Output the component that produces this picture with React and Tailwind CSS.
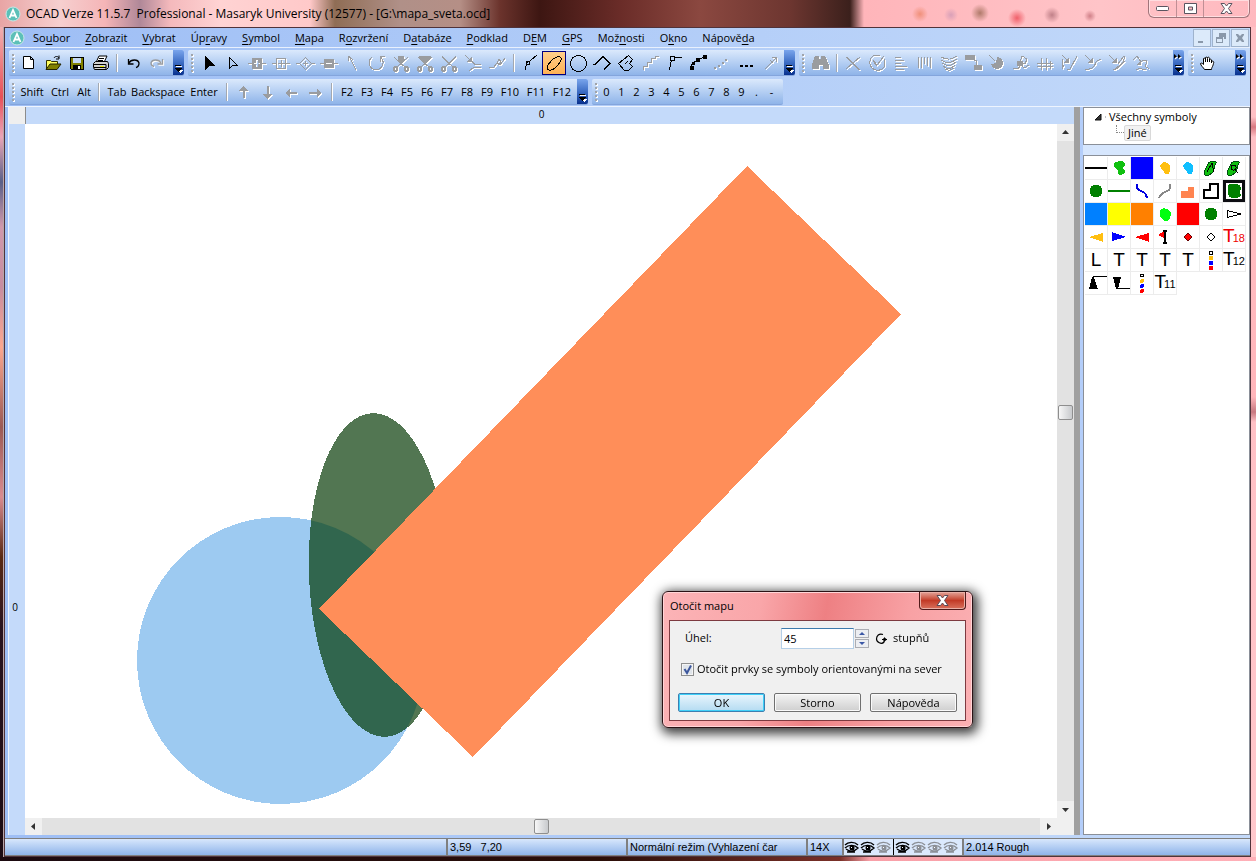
import React, { useState } from 'react';
import clsx from 'clsx';

const menuItems = [
  ['So', 'u', 'bor'],
  ['', 'Z', 'obrazit'],
  ['', 'V', 'ybrat'],
  ['Úp', 'r', 'avy'],
  ['', 'S', 'ymbol'],
  ['', 'M', 'apa'],
  ['R', 'o', 'zvržení'],
  ['D', 'a', 'tabáze'],
  ['', 'P', 'odklad'],
  ['D', 'E', 'M'],
  ['', 'G', 'PS'],
  ['Mož', 'n', 'osti'],
  ['O', 'k', 'no'],
  ['Nápově', 'd', 'a'],
];

// s = stroked path, s2 = thick stroked path, f = filled path, all in currentColor
const rings = 'M6.500 16a2 2 0 1 0 .1 0zM17.500 16a2 2 0 1 0 .1 0z';
const icons = {
  select: { f: 'M8 5v14l4-4h6z' },
  selectPoint: { s: 'M8.500 6.500v11l3-3h5z' },
  addNode: { s: 'M3 12.500h5M17 12.500h4', f: 'M7 7h10v11H7zM11 9v3H9v1h2v3h2v-3h2v-1h-2V9z' },
  addCorner: { s: 'M3 12.500h4M17 12.500h4M7.500 7.500h9v10h-9zM12.500 9v7M9 12.500h7' },
  addDash: { s: 'M3 12.500h3M18 12.500h4M12.500 6.500l6 6-6 6-6-6zM12.500 10v5M10 12.500h5' },
  removeNode: { s: 'M3 12.500h5M17 12.500h4', f: 'M7 8h10v9H7zM9 12v1h6v-1z' },
  direction: { s: 'M8 5l7 14M7.500 5v5M8 5l4 4' },
  rotate: { s: 'M7.500 5.500C2 10 4 18.500 11 18.500c7 0 9-8 5-12M20 5.500h-4.500v5' },
  cutPoint: { s: 'M5 6l11 10M19 6L8 16M6 7l11 10M18 7L7 17', s2: rings, f: 'M9 5h6v5l-3 3-3-3z' },
  cutArea: { s: 'M5 6l11 10M19 6L8 16M6 7l11 10M18 7L7 17', s2: rings, f: 'M6 5h12v3l-6 5-6-5z' },
  cutLine: { s: 'M5 5l11 11M19 5L8 16M5 6l12 11M19 6L7 17', s2: rings },
  merge: { s: 'M4 4l6 6M20 13.500h-6l-3-3M20 16.500h-7l-5 3', f: 'M11 5v6H5z' },
  reshape: { s: 'M4 17l5-1 3-4 3 2 5-7M12 12l2-4 2 3-3 3' },
  curve: { s: 'M7.500 19c0-5 1-7 3-9M12 10l7-6M8.500 10.500h3v3h-3z' },
  ellipse: { s: 'M6 18.500C3 15 13 4 18 6s-7 16-12 12.500z' },
  circle: { s: 'M12.500 4.500a8 8 0 1 1 0 16a8 8 0 1 1 0-16z' },
  rectLine: { s: 'M3 13.500h2L13 5.500l7 7-6 6' },
  rectArea: { s: 'M14.500 4.500l4 4-3 4 3 3-4 4h-4l-6-7zM14 10l-3 3' },
  stairs: { s: 'M5.500 19v-4h4v-4h4V7.500h4V5h3' },
  numeric: { s: 'M7.500 19l2-10M12 6.500h8M8.500 5.500h4v4h-4z' },
  freehand: { s: 'M5 17c1-6 3-6 7-8l6-3', f: 'M4 15h4v4H4zM10 7h4v4h-4zM17 4h4v4h-4zM6 11h3v3H6z' },
  dotted: { s2: 'M4 17h2M8 15h2M12 12h2M15 9h2' },
  more: { f: 'M6 14h3v2H6zM11 14h3v2h-3zM16 14h3v2h-3z' },
  measure: { s: 'M7 18L18 7M14 6.500h4.500V11M12 9l3 3' },
  find: { f: 'M7 5h4v3h2V5h4l4 9v4h-6v-4h-4v4H4v-4z' },
  cross: { s: 'M5 6l13 13M19 6L5 18M6 6l13 13' },
  check: { s: 'M15 5C9 2 4 7 5 13s10 9 14 3c1-3 1-5 0-8M8 9l4 5 7-9M8 10l4 5' },
  alignLeft: { s: 'M6 6.500h6M6 9.500h9M6 12.500h6M6 15.500h12M6 18.500h9' },
  bars: { s: 'M5.500 6v11M8.500 6v11M11.500 6v7M14.500 6v9M17.500 6v11' },
  waves: { s: 'M4 6c6 3 10 3 16-1M4 9c6 4 10 3 16-1M5 12c6 4 9 3 14-1M6 15c5 4 8 3 12-1M8 18c4 2 6 1 9-1' },
  swap: { s: 'M13 9h2v5', f: 'M4 4h10v5H4zM13 14h8v5h-8z' },
  target: { s: 'M4 4l6 6', f: 'M12 6a6 6 0 1 1-6 7l5-1z' },
  chain: { s: 'M4 17l5 1 3-4 3 3 5-3M9 13l4-3M13 5l5 3-2 5-5-2z', f: 'M8 10h6v5H8z' },
  fence: { s: 'M4 12.500h16M4 15.500h16M8.500 7v12M13.500 7v12M17.500 10v8' },
  bend: { s: 'M5.500 8v10l1-4M5 4l7 7M10 18l3 0 7-13', f: 'M12 6v6H6z' },
  smooth: { s: 'M4 4l7 7M4 18.500c6 0 9-2 10-5s3-5 6-5', f: 'M12 6v6H6z' },
  fill: { s: 'M4 4l7 7M8 19c6-1 10-5 12-14M10 18l10-8M13 13l6-8', f: 'M12 6v6H6z' },
  wave: { s: 'M4 9l4-4 4 6-3 3M12 11c4-4 8-1 5 2s3 4 3 5M7 19c3-3 6 0 10-1', f: 'M12 9v5H8z' },
};

const editTools = [
  ['select'], ['selectPoint'], ['addNode', 1], ['addCorner', 1], ['addDash', 1], ['removeNode', 1],
  ['direction', 1], ['rotate', 1], ['cutPoint', 1], ['cutArea', 1], ['cutLine', 1], ['merge', 1], ['reshape', 1],
];
const drawTools = [
  ['curve'], ['ellipse'], ['circle'], ['rectLine'], ['rectArea'], ['stairs', 1],
  ['numeric'], ['freehand'], ['dotted', 1], ['more'], ['measure', 1],
];
const objectTools = [
  'cross', 'check', 'alignLeft', 'bars', 'waves', 'swap', 'target', 'chain', 'fence', 'bend', 'smooth', 'fill', 'wave',
];

const Glyph = ({ icon }) => (
  <>
    {icon.f && <path d={icon.f} fill="currentColor" fillRule="evenodd" />}
    {icon.s && <path d={icon.s} fill="none" stroke="currentColor" />}
    {icon.s2 && <path d={icon.s2} fill="none" stroke="currentColor" strokeWidth="2" />}
  </>
);

const ToolButton = ({ name, off, active, onClick }) => (
  <button
    aria-label={name}
    disabled={Boolean(off)}
    onClick={onClick}
    className={clsx(
      'flex size-6 shrink-0 items-center justify-center',
      off ? 'text-[#9a9c9f]' : 'text-black',
      active && 'bg-gradient-to-b from-[#ffd08c] to-[#ffb051] outline -outline-offset-1 outline-[#000080]'
    )}
  >
    <svg width="24" height="24" viewBox="0 0 24 24" shapeRendering="crispEdges" className="shrink-0">
      {off ? (
        <g className="text-white" transform="translate(1 1)">
          <Glyph icon={icons[name]} />
        </g>
      ) : null}
      <Glyph icon={icons[name]} />
    </svg>
  </button>
);

const Grip = () => (
  <div className="flex shrink-0 flex-col gap-0.5 pr-0.5 pl-[3px]">
    {[0, 1, 2, 3, 4].map((i) => (
      <span key={i} className="size-0.5 bg-[#a0a4aa] shadow-[1px_1px_0_white]" />
    ))}
  </div>
);

const Divider = () => (
  <div className="flex w-[9px] shrink-0 justify-center">
    <span className="h-[18px] w-0.5 border-r border-white bg-[#a3a8b0]" />
  </div>
);

const Overflow = ({ more }) => (
  <button
    aria-label="Toolbar options"
    className="ml-auto flex h-full w-[11px] shrink-0 flex-col items-center justify-between rounded-r-xs bg-gradient-to-b from-[#7aa5ec] via-[#3d6dc4] to-[#08308e] pt-1 pb-0.5"
  >
    <svg width="9" height="6" viewBox="0 0 9 6">
      {more && (
        <>
          <path d="M1 1l3 2.500-3 2zM5 1l3 2.500-3 2z" fill="#fff" />
          <path d="M0 0l3 2.500-3 2zM4 0l3 2.500-3 2z" fill="#000" />
        </>
      )}
    </svg>
    <svg width="9" height="8" viewBox="0 0 9 8" shapeRendering="crispEdges">
      <path d="M2 1h6v1H2zM3 5h6L6 8z" fill="#fff" />
      <path d="M1 0h6v1H1zM1 3h7L4.500 7z" fill="#000" />
    </svg>
  </button>
);

const Bar = ({ className, children }) => (
  <div
    className={clsx(
      'flex h-[26px] shrink-0 items-center rounded-xs border-b border-[#84a5dc] bg-gradient-to-b from-[#dbe9fc] via-[#b5cff3] to-[#8fb4e9]',
      className
    )}
  >
    {children}
  </div>
);

const KeyButton = ({ className, children }) => (
  <button className={clsx('shrink-0 text-center text-[11px] leading-4 text-black', className)}>{children}</button>
);

const Logo = () => (
  <svg width="16" height="16" viewBox="0 0 16 16" className="shrink-0">
    <circle cx="8" cy="8" r="7" fill="#5cc0b8" stroke="#c7e8e6" />
    <path d="M4.500 12L8 4l3.500 8M6 9.500h4" fill="none" stroke="#fff" strokeWidth="1.800" />
  </svg>
);

const TitleBar = () => (
  <header className="flex h-[27px] shrink-0 items-center bg-[radial-gradient(circle_at_1017px_18px,#f0606a_0,transparent_9px),radial-gradient(circle_at_920px_14px,#f0907a_0,transparent_8px),radial-gradient(circle_at_980px_13px,#b07a6a_0,transparent_9px),radial-gradient(circle_at_951px_15px,#d9a0b8_0,transparent_7px),radial-gradient(circle_at_1052px_15px,#c08088_0,transparent_8px),radial-gradient(circle_at_1090px_16px,#d08088_0,transparent_6px),linear-gradient(90deg,#e8a5a5_0,#f6cfcf_60px,#f5b5b7_105px,#b08898_140px,#f4b9bc_170px,#ffd3d3_220px,#ffc9c9_310px,#8f6d55_335px,#b09088_400px,#b58f86_460px,#6b332c_500px,#3d1612_540px,#6a2c28_620px,#8b4840_700px,#6d3630_790px,#3b201c_850px,#ffb5ba_864px,#ffc4c8_1100px,#ffb9bf_100%)] pl-[5px]">
    <Logo />
    <h1 className="ml-[5px] text-[12px] whitespace-pre text-black">
      {'OCAD Verze 11.5.7  Professional - Masaryk University (12577) - [G:\\mapa_sveta.ocd]'}
    </h1>
    <div className="mr-1.5 ml-auto flex h-[18px] self-start rounded-b-md border border-t-0 border-[#a0757b] shadow-[inset_0_0_0_1px_#ffdde0]">
      <button aria-label="Minimize" className="flex w-7 items-center justify-center border-r border-[#c08f95]">
        <svg width="13" height="6" viewBox="0 0 13 6"><rect x=".5" y=".5" width="12" height="4" rx="1" fill="#fff" stroke="#5a5560" /></svg>
      </button>
      <button aria-label="Maximize" className="flex w-[27px] items-center justify-center border-r border-[#c08f95]">
        <svg width="13" height="11" viewBox="0 0 13 11"><path d="M.5.5h12v10H.5zM4.500 4v3h4V4z" fill="#fff" stroke="#5a5560" fillRule="evenodd" /></svg>
      </button>
      <button aria-label="Close" className="flex w-[45px] items-center justify-center">
        <svg width="13" height="11" viewBox="0 0 13 11"><path d="M1 .5h3.500l2 2.500 2-2.500H12L8.500 5.500 12 10.500H8.500l-2-2.500-2 2.500H1l3.500-5z" fill="#fff" stroke="#5a5560" /></svg>
      </button>
    </div>
  </header>
);

const MenuBar = () => (
  <nav className="flex h-5 shrink-0 items-center border-b border-[#e8f0fd] pl-1">
    <Logo />
    <div className="flex gap-px pl-px">
      {menuItems.map(([pre, key, post]) => (
        <button key={pre + key + post} className="px-[7px] text-[11px] leading-4 text-black">
          {pre}<span className="underline underline-offset-2">{key}</span>{post}
        </button>
      ))}
    </div>
    <div className="ml-auto flex gap-px pr-px text-[#8a98aa]">
      {['M5 12h5v2H5z', 'M7 4h7v6h-2V8H7zM4 8h7v6H4zM5 10v3h5v-3z', 'M5 5h2l2 2 2-2h2v1l-2 3 2 3v1h-2l-2-2-2 2H5v-1l2-3-2-3z'].map((d) => (
        <button key={d} aria-label="Document window" className="flex size-[18px] items-center justify-center border border-[#9fb3cd] bg-[#dceafa]">
          <svg width="18" height="18" viewBox="0 0 18 18" className="shrink-0"><path d={d} fill="currentColor" fillRule="evenodd" /></svg>
        </button>
      ))}
    </div>
  </nav>
);

const FileIcons = () => (
  <>
    <button aria-label="New" className="size-6 shrink-0">
      <svg width="24" height="24" viewBox="0 0 24 24">
        <path d="M7.500 5.500h7l3 3v9h-10zM14.500 5.500v3h3" fill="#fff" stroke="#000" />
      </svg>
    </button>
    <button aria-label="Open" className="size-6 shrink-0">
      <svg width="24" height="24" viewBox="0 0 24 24">
        <path d="M6.500 18V9.500h4l1 1h6V13" fill="#ffff60" stroke="#333300" />
        <path d="M6 18.500l4-5.500h11l-4 5.500z" fill="#808000" stroke="#222200" />
        <path d="M14 7c1-2 4-2 5 0M19 4.500V8h-3" fill="none" stroke="#000" />
      </svg>
    </button>
    <button aria-label="Save" className="size-6 shrink-0">
      <svg width="24" height="24" viewBox="0 0 24 24" shapeRendering="crispEdges">
        <path d="M6.500 6.500h13v12h-12l-1-1z" fill="#808000" stroke="#000" />
        <path d="M9 7h8v5H9z" fill="#c5d8f3" />
        <path d="M9 14h8v4H9z" fill="#000" />
        <path d="M14 15h2v3h-2z" fill="#fff" />
      </svg>
    </button>
    <button aria-label="Print" className="size-6 shrink-0">
      <svg width="24" height="24" viewBox="0 0 24 24">
        <path d="M8 11.500l3-6.500h8l-3 6.500z" fill="#fff" stroke="#000" />
        <path d="M11 7.500h5M10 9.500h5" stroke="#000" />
        <path d="M5.500 12.500l2-2h12l1 2v4l-2 2h-12l-1-2z" fill="#d0d0d0" stroke="#000" />
        <path d="M5 13.500h13v5M6 16.500h12" fill="none" stroke="#000" />
        <path d="M12 15h4v1h-4z" fill="#e8e800" />
      </svg>
    </button>
    <Divider />
    <button aria-label="Undo" className="size-6 shrink-0">
      <svg width="24" height="24" viewBox="0 0 24 24">
        <path d="M8 12c2-4 9-4 10 0 0 2-1 4-3 4.500M7.500 8v5h5" fill="none" stroke="#000" strokeWidth="1.300" />
      </svg>
    </button>
    <button aria-label="Redo" disabled className="size-6 shrink-0">
      <svg width="24" height="24" viewBox="0 0 24 24" fill="none">
        <path d="M17 13c-2-4-9-4-10 0 0 2 1 3 3 3.500M18.500 9v5h-5" stroke="#fff" strokeWidth="1.300" />
        <path d="M16 12c-2-4-9-4-10 0 0 2 1 3 3 3.500M17.500 8v5h-5" stroke="#9a9c9f" strokeWidth="1.300" />
      </svg>
    </button>
  </>
);

const arrowKeys = [
  'M12 18v-7H8l4.500-5L17 11h-3v7z',
  'M12 6v8H8l4.500 5L17 14h-3V6z',
  'M18 12h-7V9l-5 4 5 4v-3h7z',
  'M6 12h8V9l5 4-5 4v-3H6z',
];

const Toolbars = ({ tool, setTool }) => (
  <div className="flex shrink-0 flex-col gap-[3px] border-b border-[#eef4fe] px-1 pt-0.5 pb-px">
    <div className="flex gap-1">
      <Bar className="w-[175px]"><Grip /><FileIcons /><Overflow /></Bar>
      <Bar className="w-[607px]">
        <Grip />
        <div className="w-0.5 shrink-0" />
        {editTools.map(([name, off]) => <ToolButton key={name} name={name} off={off} />)}
        <Divider />
        {drawTools.map(([name, off]) => (
          <ToolButton key={name} name={name} off={off} active={tool === name} onClick={() => setTool(name)} />
        ))}
        <Overflow />
      </Bar>
      <Bar className="min-w-0 flex-1">
        <Grip />
        <div className="w-0.5 shrink-0" />
        <ToolButton name="find" off />
        <Divider />
        {objectTools.map((name) => <ToolButton key={name} name={name} off />)}
        <Overflow more />
      </Bar>
      <Bar className="w-[58px]">
        <Grip />
        <button aria-label="Pan" className="size-6 shrink-0">
          <svg width="24" height="24" viewBox="0 0 24 24">
            <path d="M9.500 18.500c-1-2-4-4-4-6 1-1 2 0 3 1V7.500c1-1 2 0 2 1V6.500c1-1 2 0 2 1V6.500c1-1 2 0 2 1v1c1-1 2 0 2 1v1c1-1 3 0 2 2-1 4-2 4-2 6z" fill="#fff" stroke="#000" />
            <path d="M10.500 8v3M12.500 8v3M14.500 8v3M16.500 9v3" stroke="#000" />
          </svg>
        </button>
        <Overflow more />
      </Bar>
    </div>
    <div className="flex gap-1">
      <Bar className="w-[579px]">
        <Grip />
        <KeyButton className="ml-1 w-6">Shift</KeyButton>
        <KeyButton className="ml-1.5 w-5">Ctrl</KeyButton>
        <KeyButton className="ml-1 w-5">Alt</KeyButton>
        <Divider />
        <KeyButton className="ml-1 w-5">Tab</KeyButton>
        <KeyButton className="ml-1 w-[54px]">Backspace</KeyButton>
        <KeyButton className="ml-1 w-[30px]">Enter</KeyButton>
        <div className="w-[3px] shrink-0" />
        <Divider />
        {arrowKeys.map((d) => (
          <button key={d} aria-label="Arrow key" className="size-6 shrink-0">
            <svg width="24" height="24" viewBox="0 0 24 24" shapeRendering="crispEdges">
              <path d={d} fill="#fff" transform="translate(1 1)" />
              <path d={d} fill="#9a9c9f" />
            </svg>
          </button>
        ))}
        <Divider />
        <div className="flex pl-px">
          {['F2', 'F3', 'F4', 'F5', 'F6', 'F7', 'F8', 'F9'].map((k) => <KeyButton key={k} className="w-5">{k}</KeyButton>)}
          {['F10', 'F11', 'F12'].map((k) => <KeyButton key={k} className="w-[26px]">{k}</KeyButton>)}
        </div>
        <Overflow />
      </Bar>
      <Bar className="w-[191px]">
        <Grip />
        {['0', '1', '2', '3', '4', '5', '6', '7', '8', '9', '.', '-'].map((k) => (
          <KeyButton key={k} className="w-[15px]">{k}</KeyButton>
        ))}
      </Bar>
    </div>
  </div>
);

const arrowPaths = { up: 'M5 10h7L8.500 6z', down: 'M5 7h7l-3.500 4z', left: 'M10 5v7L6 8.500z', right: 'M7 5v7l4-3.500z' };

const ScrollArrow = ({ dir }) => (
  <button aria-label={`Scroll ${dir}`} className="size-[17px] shrink-0 bg-[#f0f0f0]">
    <svg width="17" height="17" viewBox="0 0 17 17"><path d={arrowPaths[dir]} fill="#333" /></svg>
  </button>
);

const thumbClass = 'size-[15px] shrink-0 rounded-xs border border-[#8e8e8e] bg-gradient-to-r from-[#f7f7f7] to-[#c8cacd]';

const MapDrawing = () => (
  <svg width="1032" height="694" viewBox="0 0 1032 694" shapeRendering="crispEdges" className="block">
    <defs>
      <clipPath id="lake"><circle cx="255.500" cy="536.500" r="143.500" /></clipPath>
    </defs>
    <circle cx="255.500" cy="536.500" r="143.500" fill="#9dcaf1" />
    <ellipse cx="354" cy="451" rx="70" ry="162" transform="rotate(-2.400 354 451)" fill="#527652" />
    <g clipPath="url(#lake)">
      <ellipse cx="354" cy="451" rx="70" ry="162" transform="rotate(-2.400 354 451)" fill="#31664e" />
    </g>
    <path d="M722 42L876 190 448 633 294 485z" fill="#ff8e59" />
  </svg>
);

const MapArea = () => (
  <main className="flex min-w-0 flex-1 flex-col border-l border-[#eef4fe]">
    <div className="flex h-[17px] shrink-0">
      <div className="w-[17px] border-r border-[#8c8c8c] bg-[#efefef]" />
      <div className="flex-1 bg-[#c4dafa] pr-[17px] text-center text-[10px] leading-[14px]">0</div>
    </div>
    <div className="flex min-h-0 flex-1">
      <div className="w-4 shrink-0 bg-[#c4dafa] pt-[475px] pr-1 text-center text-[10px] leading-4">0</div>
      <div className="flex min-w-0 flex-1 flex-col">
        <div className="flex min-h-0 flex-1">
          <div className="min-w-0 flex-1 overflow-hidden bg-white"><MapDrawing /></div>
          <div className="flex w-[17px] shrink-0 flex-col items-center bg-[#e2e2e2]">
            <ScrollArrow dir="up" />
            <div className={clsx(thumbClass, 'mt-[264px] mb-auto')} />
            <ScrollArrow dir="down" />
          </div>
        </div>
        <div className="flex shrink-0 items-center bg-[#e2e2e2]">
          <ScrollArrow dir="left" />
          <div className={clsx(thumbClass, 'mx-auto')} />
          <ScrollArrow dir="right" />
          <div className="size-[17px] shrink-0 bg-[#f0f0f0]" />
        </div>
      </div>
    </div>
  </main>
);

const Path = ({ d, fill = 'none', stroke, width = 1 }) => <path d={d} fill={fill} stroke={stroke} strokeWidth={width} />;

const blob = 'M7 7c2-3 6-2 8 0s0 3 1 5-1 6-4 5-2-4-4-5-2-3-1-5z';
const leaf = 'M5 18c-2-4 1-6 2-9s2-5 6-5 4 1 2 4 0 5-2 7-5 5-8 3z';
const symbols = [
  <Path d="M0 11h22" stroke="#000" width={2} />,
  <Path d="M6 7c1-3 4-2 6-3s4 1 5 3-2 2-2 4 3 2 2 4-4 4-6 3 0-4-1-5-5-2-4-6z" fill="#10c010" />,
  <Path d="M0 0h22v22H0z" fill="#00f" />,
  <Path d={blob} fill="#ffbf10" />,
  <Path d={blob} fill="#10bfff" />,
  <><Path d={leaf} fill="#10c010" stroke="#004d10" /><Path d="M7 15l5-9 2 9" stroke="#000" /></>,
  <><Path d={leaf} fill="#10c010" stroke="#004d10" /><Path d="M8 10c1-3 6-2 5 1s-5 3-5-1zM12 13l3 3" stroke="#000" /></>,
  <circle cx="11" cy="11" r="6.500" fill="#008000" />,
  <Path d="M0 11h22" stroke="#008000" width={2} />,
  <Path d="M6 4c0 4 0 6 4 7s5 3 6 7" stroke="#0000e0" width={2} />,
  <Path d="M16 4c1 6-2 7-5 8s-5 3-6 6" stroke="#888" width={2} />,
  <Path d="M4 11h7V7h6v11H4z" fill="#ff8450" />,
  <Path d="M10 4h8v14H4v-8h6z" stroke="#000" width={2} />,
  <><Path d="M5 5c3-2 9-1 12 0l1 4-1 3 1 4c-3 3-9 2-12 1l-1-5z" fill="#008000" /><Path d="M1.500 1.500h19v19h-19z" stroke="#0d0d12" width={3} /></>,
  <Path d="M0 0h22v22H0z" fill="#0080ff" />,
  <Path d="M0 0h22v22H0z" fill="#ff0" />,
  <Path d="M0 0h22v22H0z" fill="#ff8000" />,
  <Path d="M6 8c2-4 6-3 9-1s2 5 1 8-4 5-7 2-4-5-3-9z" fill="#00ff10" />,
  <Path d="M0 0h22v22H0z" fill="#f00" />,
  <circle cx="11" cy="11" r="6.500" fill="#008000" />,
  <Path d="M4.500 7.500L18 11 4.500 14.500z" stroke="#000" />,
  <Path d="M4 11l14-4v9z" fill="#ffbf10" />,
  <Path d="M4 6l14 5-14 4z" fill="#00f" />,
  <Path d="M4 11l14-4v9z" fill="#f00" />,
  <><Path d="M4 9l6-4v7z" fill="#f00" /><Path d="M11 4v14M9 17h4M9 5h4" stroke="#000" width={2} /></>,
  <Path d="M11 7l4 4-4 4-4-4z" fill="#f00" stroke="#600" />,
  <Path d="M11 7l4 4-4 4-4-4z" stroke="#000" />,
  'T18', 'L', 'T', 'T', 'T', 'T',
  <><Path d="M9.500 2.500h3v3h-3z" stroke="#000" /><Path d="M9 7h4v4H9z" fill="#ffbf10" /><Path d="M9 12h4v4H9z" fill="#00f" /><Path d="M9 17h4v4H9z" fill="#f00" /></>,
  'T12',
  <><Path d="M4 17l3-12h2l4 12z" fill="#000" /><Path d="M8 4.500h14" stroke="#000" /></>,
  <><Path d="M5 5h8l-3 12H8z" fill="#000" /><Path d="M8 16.500h14" stroke="#000" /></>,
  <><circle cx="11" cy="3.500" r="1.500" fill="none" stroke="#000" /><circle cx="11" cy="9" r="2" fill="#ffbf10" /><circle cx="11" cy="14" r="2" fill="#00f" /><circle cx="11" cy="19" r="2" fill="#f00" /></>,
  'T11',
];

const SymbolCell = ({ symbol, index }) => (
  <button
    aria-label={`Symbol ${index + 1}`}
    className="flex size-[23px] items-center justify-center border-r border-b border-[#ececec]"
  >
    {typeof symbol === 'string' ? (
      <span className={clsx('flex items-baseline font-[Liberation_Sans] text-[19px] leading-5', symbol === 'T18' ? 'text-[#e00]' : 'text-black')}>
        {symbol[0]}
        {symbol.length > 1 && <span className="-ml-0.5 text-[11px]">{symbol.slice(1)}</span>}
      </span>
    ) : (
      <svg width="22" height="22" viewBox="0 0 22 22" shapeRendering="crispEdges" className="shrink-0">{symbol}</svg>
    )}
  </button>
);

const SymbolPanel = () => (
  <aside className="flex w-[167px] shrink-0 flex-col bg-[#d6e6fd]">
    <div className="h-[38px] shrink-0 border border-[#8a8f98] bg-white text-[11px] leading-4">
      <div className="flex items-center pt-px pl-2.5">
        <svg width="15" height="10" viewBox="0 0 15 10"><path d="M7 2v6H1z" fill="#333" stroke="#111" /><path d="M11 5h1" stroke="#888" /></svg>
        <span>Všechny symboly</span>
      </div>
      <div className="flex items-start pl-8">
        <span className="h-2 w-2 border-b border-l border-dotted border-[#888]" />
        <span className="rounded-xs border border-[#d9d9d9] bg-[#f2f2f2] px-[3px] leading-[14px]">Jiné</span>
      </div>
    </div>
    <div className="mt-[10px] min-h-0 flex-1 border border-[#8a8f98] bg-white p-px">
      <div className="grid grid-cols-[repeat(7,23px)]">
        {symbols.map((symbol, index) => <SymbolCell key={index} symbol={symbol} index={index} />)}
      </div>
    </div>
  </aside>
);

const Eye = ({ off }) => (
  <svg width="16" height="14" viewBox="0 0 16 14" className={clsx('shrink-0', off ? 'text-[#8b8f96]' : 'text-black')}>
    <path d="M1 5c3-3 9-4 13 0M1 8c4-4 10-3 13 0-4 4-8 4-12 1M3 12h8" fill="none" stroke="currentColor" strokeWidth="1.400" />
    <circle cx="8" cy="8" r="2.500" fill="currentColor" />
    <path d="M7 7h1v1H7z" fill="#fff" />
  </svg>
);

const StatusCell = ({ className, children }) => (
  <div className={clsx('flex shrink-0 items-center overflow-hidden border-l-2 border-[#7f7f7f] pl-0.5 whitespace-pre', className)}>{children}</div>
);

const StatusBar = () => (
  <footer className="flex h-[18px] shrink-0 border-y border-[#7f7f7f] bg-gradient-to-b from-[#d8e7fc] to-[#8fb4e9] font-[Liberation_Sans] text-[11px] text-black">
    <div className="w-[441px] shrink-0" />
    <StatusCell className="w-[180px]">{'3,59   7,20'}</StatusCell>
    <StatusCell className="w-[180px]">Normální režim (Vyhlazení čar</StatusCell>
    <StatusCell className="w-9">14X</StatusCell>
    <div className="flex w-[120px] shrink-0 items-center border-l-2 border-[#7f7f7f] bg-[#dbe9fd]">
      <Eye /><Eye /><Eye off />
      <span className="mx-px h-4 w-px bg-black" />
      <Eye /><Eye off /><Eye off /><Eye off />
    </div>
    <StatusCell className="flex-1">2.014 Rough</StatusCell>
  </footer>
);

const DialogButton = ({ primary, children }) => (
  <button
    className={clsx(
      'h-[19px] flex-1 rounded-xs border text-[11px] leading-[15px] text-black',
      primary
        ? 'border-[#3c7fb1] bg-gradient-to-b from-[#e9f5fc] to-[#b4dcf2] shadow-[inset_0_0_0_1px_#3fd0f8]'
        : 'border-[#707070] bg-gradient-to-b from-[#f4f4f4] to-[#cfcfcf] shadow-[inset_0_0_0_1px_#fafafa]'
    )}
  >
    {children}
  </button>
);

const RotateDialog = () => {
  const [angle, setAngle] = useState('45');
  const [rotateSymbols, setRotateSymbols] = useState(true);

  return (
    <div
      role="dialog"
      aria-label="Otočit mapu"
      className="absolute top-[591px] left-[662px] w-[311px] rounded-md border border-[#2a1215] bg-[linear-gradient(100deg,#fcb4b7_0,#f9a6a9_30%,#ee8083_50%,#f8a1a4_75%,#fbb1b4_100%)] px-1.5 pb-1.5 shadow-[inset_0_0_0_1px_#ffd5d7,2px_3px_11px_3px_rgba(0,0,0,0.75)]"
    >
      <div className="flex h-7 items-center">
        <h2 className="pl-px text-[11px] text-black">Otočit mapu</h2>
        <button
          aria-label="Close"
          className="ml-auto flex h-[18px] w-[47px] items-center justify-center self-start rounded-b-sm border border-t-0 border-[#4f1a1a] bg-gradient-to-b from-[#e2a399] via-[#c23a26] to-[#d9705c] shadow-[inset_0_0_0_1px_#eab0a6]"
        >
          <svg width="13" height="11" viewBox="0 0 13 11"><path d="M1 .5h3.500l2 2.500 2-2.500H12L8.500 5.500 12 10.500H8.500l-2-2.500-2 2.500H1l3.500-5z" fill="#fff" stroke="#5b4a55" /></svg>
        </button>
      </div>
      <div className="flex flex-col border border-[#7d3a40] bg-[#f0f0f0] px-2 pt-[7px] pb-2 text-[11px] text-black">
        <div className="flex h-[21px] items-center pl-[7px]">
          <label htmlFor="angle" className="w-24">Úhel:</label>
          <input
            id="angle"
            autoFocus
            value={angle}
            onChange={(e) => setAngle(e.target.value)}
            className="h-[21px] w-[73px] border border-[#b5cfe7] border-t-[#3d7bad] bg-white px-0.5 outline-none"
          />
          <div className="ml-px flex w-3.5 flex-col gap-px">
            {['M3 6h6L6 3z', 'M3 3h6L6 6z'].map((d) => (
              <button key={d} aria-label="Step" className="flex h-[9px] items-center justify-center border border-[#abadb3] bg-[#eceef2]">
                <svg width="12" height="9" viewBox="0 0 12 9" className="shrink-0"><path d={d} fill="#3a57a5" /></svg>
              </button>
            ))}
          </div>
          <svg width="14" height="12" viewBox="0 0 14 12" className="mr-1 ml-1.5 shrink-0">
            <path d="M8 1.500C4 0 1.500 3 1.500 6s5 6 7.500 3V5M7 6.500h5" fill="none" stroke="#000" strokeWidth="1.200" />
            <path d="M9 4l3 2.500L9 9z" />
          </svg>
          <span>stupňů</span>
        </div>
        <label className="mt-3 flex h-4 items-center gap-[3px] pl-[3px]">
          <span className="relative flex">
            <input
              type="checkbox"
              checked={rotateSymbols}
              onChange={(e) => setRotateSymbols(e.target.checked)}
              className="size-[13px] appearance-none border border-[#8e8f8f] bg-[#dfe4ea] shadow-[inset_0_0_0_1px_#f4f4f4]"
            />
            {rotateSymbols && (
              <svg width="13" height="13" viewBox="0 0 13 13" className="pointer-events-none absolute inset-0">
                <path d="M3.500 6l2.500 4L10 2.500" fill="none" stroke="#3b569c" strokeWidth="2" />
              </svg>
            )}
          </span>
          Otočit prvky se symboly orientovanými na sever
        </label>
        <div className="mt-4 flex gap-[9px]">
          <DialogButton primary>OK</DialogButton>
          <DialogButton>Storno</DialogButton>
          <DialogButton>Nápověda</DialogButton>
        </div>
      </div>
    </div>
  );
};

const App = () => {
  const [tool, setTool] = useState('ellipse');

  return (
    <div className="relative flex h-screen flex-col overflow-hidden bg-[#fbb5ba] font-['Open_Sans',sans-serif]">
      <TitleBar />
      <div className="flex min-h-0 flex-1">
        <div className="w-1 shrink-0 border-r border-[#b9a5a8] bg-[linear-gradient(180deg,#f0b0b0_0,#e85058_70px,#e9a5b8_110px,#5a6088_155px,#d098ac_200px,#c78ca0_260px,#fba78f_320px,#9b5a55_400px,#d98b90_470px,#5a2a14_530px,#2a1420_600px,#1c0c14_100%)]" />
        <div className="flex min-w-0 flex-1 flex-col border border-[#50333a] bg-gradient-to-r from-[#9ebef5] to-[#c4dafa]">
          <MenuBar />
          <Toolbars tool={tool} setTool={setTool} />
          <div className="flex min-h-0 flex-1 pl-[3px]">
            <MapArea />
            <div className="w-1.5 shrink-0 bg-[#a0a0a0]" />
            <div className="w-[3px] shrink-0 bg-[#b4cefa]" />
            <SymbolPanel />
          </div>
          <div className="h-[3px] shrink-0" />
          <StatusBar />
        </div>
        <div className="w-[5px] shrink-0 bg-[linear-gradient(180deg,#ffc0c5_0,#ffc0c5_90px,#d87880_100px,#ffc0c5_110px,#ffb5ba_370px,#c87880_385px,#ffc0c5_395px,#ffc8cc_100%)]" />
      </div>
      <div className="h-1 shrink-0 bg-[linear-gradient(90deg,#1c0a10_0,#2a0e08_600px,#7a3028_840px,#f8a0a8_870px,#ffb0b8_100%)]" />
      <RotateDialog />
    </div>
  );
};

export default App;
